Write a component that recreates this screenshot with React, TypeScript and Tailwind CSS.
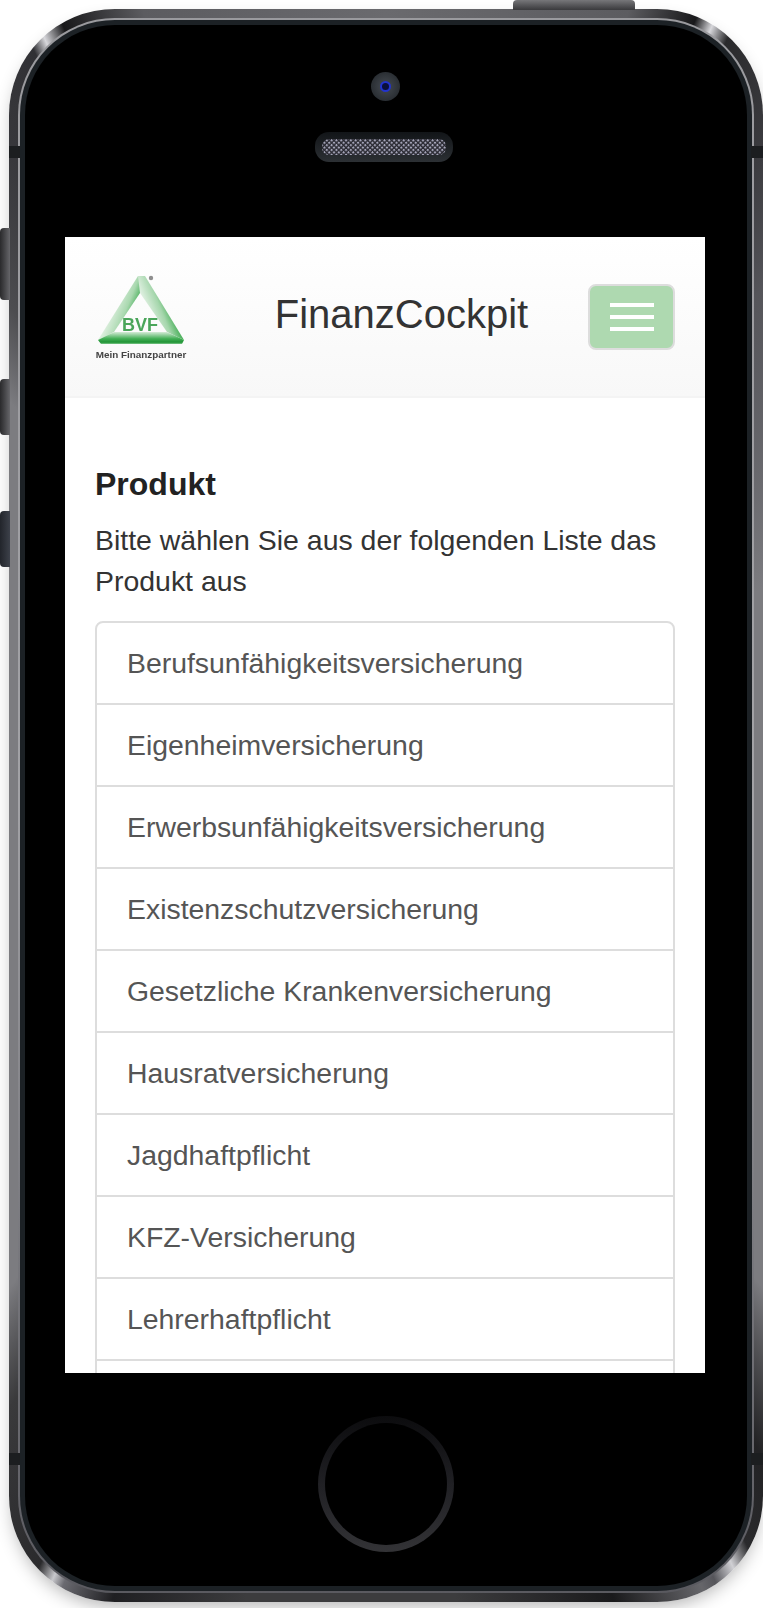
const products = [
  'Berufsunfähigkeitsversicherung',
  'Eigenheimversicherung',
  'Erwerbsunfähigkeitsversicherung',
  'Existenzschutzversicherung',
  'Gesetzliche Krankenversicherung',
  'Hausratversicherung',
  'Jagdhaftpflicht',
  'KFZ-Versicherung',
  'Lehrerhaftpflicht',
];

const BvfLogo = () => (
  <div className="flex w-[92px] flex-col items-center blur-[0.5px]">
    <svg width="92" height="72" viewBox="0 0 92 72">
      <defs>
        <linearGradient id="bvf-left" x1="0.3" y1="0.5" x2="0.75" y2="0.75">
          <stop offset="0" stopColor="#dff0e0" />
          <stop offset="0.55" stopColor="#a9d8af" />
          <stop offset="1" stopColor="#2fa545" />
        </linearGradient>
        <linearGradient id="bvf-right" x1="0.75" y1="0.5" x2="0.3" y2="0.75">
          <stop offset="0" stopColor="#3aa94c" />
          <stop offset="0.45" stopColor="#a5d6ac" />
          <stop offset="1" stopColor="#e4f2e5" />
        </linearGradient>
        <linearGradient id="bvf-base" x1="0" y1="0" x2="0" y2="1">
          <stop offset="0" stopColor="#d5ebd7" />
          <stop offset="0.55" stopColor="#45b058" />
          <stop offset="0.85" stopColor="#1f9334" />
          <stop offset="1" stopColor="#7cc688" />
        </linearGradient>
      </defs>
      <polygon points="43,2 49,2 45,19 19,58 3,66" fill="url(#bvf-left)" />
      <polygon points="43,2 50,2 89,66 72,58 45,19" fill="url(#bvf-right)" />
      <polygon points="3,66 19,58 72,58 89,66 87,70 6,70" fill="url(#bvf-base)" />
      <text x="45" y="57" textAnchor="middle" fontFamily="'Liberation Sans', sans-serif" fontWeight="700" fontSize="18" fill="#4aa55a">
        BVF
      </text>
      <circle cx="56" cy="4" r="2.2" fill="#8f8f8f" />
    </svg>
    <span className="mt-[3px] whitespace-nowrap font-['Liberation_Sans',sans-serif] text-[9.9px] leading-[12px] font-bold text-[#444]">
      Mein Finanzpartner
    </span>
  </div>
);

const SpeakerGrille = () => (
  <svg width="124" height="16" viewBox="0 0 124 16">
    <defs>
      <pattern id="grille" width="3.4" height="3.4" patternUnits="userSpaceOnUse" patternTransform="rotate(45)">
        <rect width="3.4" height="3.4" fill="#2a2a32" />
        <rect width="2" height="2" fill="#a4a4b8" />
      </pattern>
    </defs>
    <rect width="124" height="16" rx="7" fill="url(#grille)" />
  </svg>
);

export default function App() {
  return (
    <div className="relative h-[1608px] w-[763px] overflow-hidden bg-white font-['Liberation_Sans',sans-serif]">
      {/* side + top buttons */}
      <div className="absolute top-0 left-[513px] h-[10px] w-[122px] rounded-t-[4px] bg-gradient-to-b from-[#77777a] to-[#3a3a3d]" />
      <div className="absolute top-[228px] left-0 h-[72px] w-[10px] rounded-l-[4px] bg-gradient-to-r from-[#2a2a2c] to-[#66666a]" />
      <div className="absolute top-[379px] left-0 h-[56px] w-[10px] rounded-l-[4px] bg-gradient-to-r from-[#2a2a2c] to-[#66666a]" />
      <div className="absolute top-[511px] left-0 h-[56px] w-[10px] rounded-l-[4px] bg-gradient-to-r from-[#22252b] to-[#3d414a]" />

      {/* phone body */}
      <div className="mt-[9px] ml-[9px] h-[1593px] w-[754px] rounded-[106px] bg-[conic-gradient(from_0deg,#6a6a6e_0deg,#5c5c60_17deg,#18181a_21.5deg,#d8d8dc_22.7deg,#2a2a2c_24deg,#3c3c40_30deg,#55555a_36deg,#7c7c80_60deg,#7c7c80_142deg,#222224_150deg,#2a2a2c_154deg,#d0d0d4_155.5deg,#55555a_157deg,#66666a_158deg,#1a1a1c_164deg,#3c3c3e_175deg,#3c3c3e_190deg,#1f1f22_199deg,#6a6a70_202.5deg,#c8c8cc_203.3deg,#2a2a2c_204.5deg,#3a3a3c_212deg,#7c7c80_218deg,#7c7c80_317deg,#4d4d50_323deg,#38383c_330deg,#303034_335deg,#d8d8dc_336deg,#18181a_337.5deg,#5c5c60_343deg,#6a6a6e_360deg)] p-[9px] shadow-[0_8px_18px_-4px_rgba(0,0,0,0.3)]">
        <div className="h-full w-full rounded-[97px] bg-gradient-to-b from-[#9a9a9e] via-[#a2a2a6] to-[#5a5a60] p-[2px]">
          <div className="h-full w-full rounded-[95px] bg-[#1c2125] p-[5px]">
            <div className="flex h-full w-full flex-col items-center rounded-[90px] bg-black pt-[47px] pr-[2px]">
              {/* camera */}
              <div className="flex h-[29px] w-[29px] items-center justify-center rounded-full bg-[radial-gradient(circle,#3a3f45_30%,#1e2226_100%)]">
                <div className="h-[11px] w-[11px] rounded-full border-2 border-[#2233cc] bg-[#0a0f3a]" />
              </div>

              {/* speaker */}
              <div className="mt-[31px] -ml-[3px] flex h-[30px] w-[138px] items-center justify-center rounded-[14px] bg-gradient-to-b from-[#121518] to-[#2c3034]">
                <SpeakerGrille />
              </div>

              {/* screen */}
              <div className="mt-[75px] h-[1136px] w-[640px] overflow-hidden bg-white">
                <header className="flex h-[161px] items-start justify-between border-b-2 border-[#f4f4f4] bg-gradient-to-b from-white to-[#f8f8f8] pr-[30px] pl-[30px]">
                  <div className="mt-[37px]">
                    <BvfLogo />
                  </div>
                  <span className="mt-[52px] ml-[28px] text-[40px] leading-[50px] text-[#333]">FinanzCockpit</span>
                  <button className="mt-[47px] flex h-[66px] w-[87px] flex-col items-center justify-center gap-[8px] rounded-[8px] border-2 border-[#ddd] bg-[#aed9b0]">
                    <span className="h-[4px] w-[44px] bg-white" />
                    <span className="h-[4px] w-[44px] bg-white" />
                    <span className="h-[4px] w-[44px] bg-white" />
                  </button>
                </header>

                <main className="px-[30px] pt-[66px]">
                  <h1 className="text-[32px] leading-[40px] font-bold text-[#222]">Produkt</h1>
                  <p className="mt-[16px] text-[28.45px] leading-[41px] text-[#333]">
                    Bitte wählen Sie aus der folgenden Liste das Produkt aus
                  </p>
                  <ul className="mt-[19px] rounded-[8px] border-2 border-[#ddd]">
                    {products.map((name, index) => (
                      <li
                        key={name}
                        className={`h-[80px] px-[30px] text-[28.4px] leading-[80px] text-[#555] ${index > 0 ? 'mt-[2px] shadow-[0_-2px_0_#ddd]' : ''}`}
                      >
                        {name}
                      </li>
                    ))}
                    <li className="mt-[2px] h-[80px] shadow-[0_-2px_0_#ddd]" />
                  </ul>
                </main>
              </div>

              {/* home button */}
              <div className="mt-[43px] ml-[1px] h-[136px] w-[136px] rounded-full bg-gradient-to-b from-[#0c0c0e] via-[#202024] to-[#333336] p-[7px]">
                <div className="h-full w-full rounded-full bg-black" />
              </div>
            </div>
          </div>
        </div>
      </div>

      {/* antenna bands */}
      <div className="absolute top-[146px] left-[9px] h-[12px] w-[11px] bg-[#1c1e20]" />
      <div className="absolute top-[146px] left-[751px] h-[12px] w-[12px] bg-[#1c1e20]" />
      <div className="absolute top-[1453px] left-[9px] h-[12px] w-[11px] bg-[#1c1e20]" />
      <div className="absolute top-[1453px] left-[751px] h-[12px] w-[12px] bg-[#1c1e20]" />
    </div>
  );
}
